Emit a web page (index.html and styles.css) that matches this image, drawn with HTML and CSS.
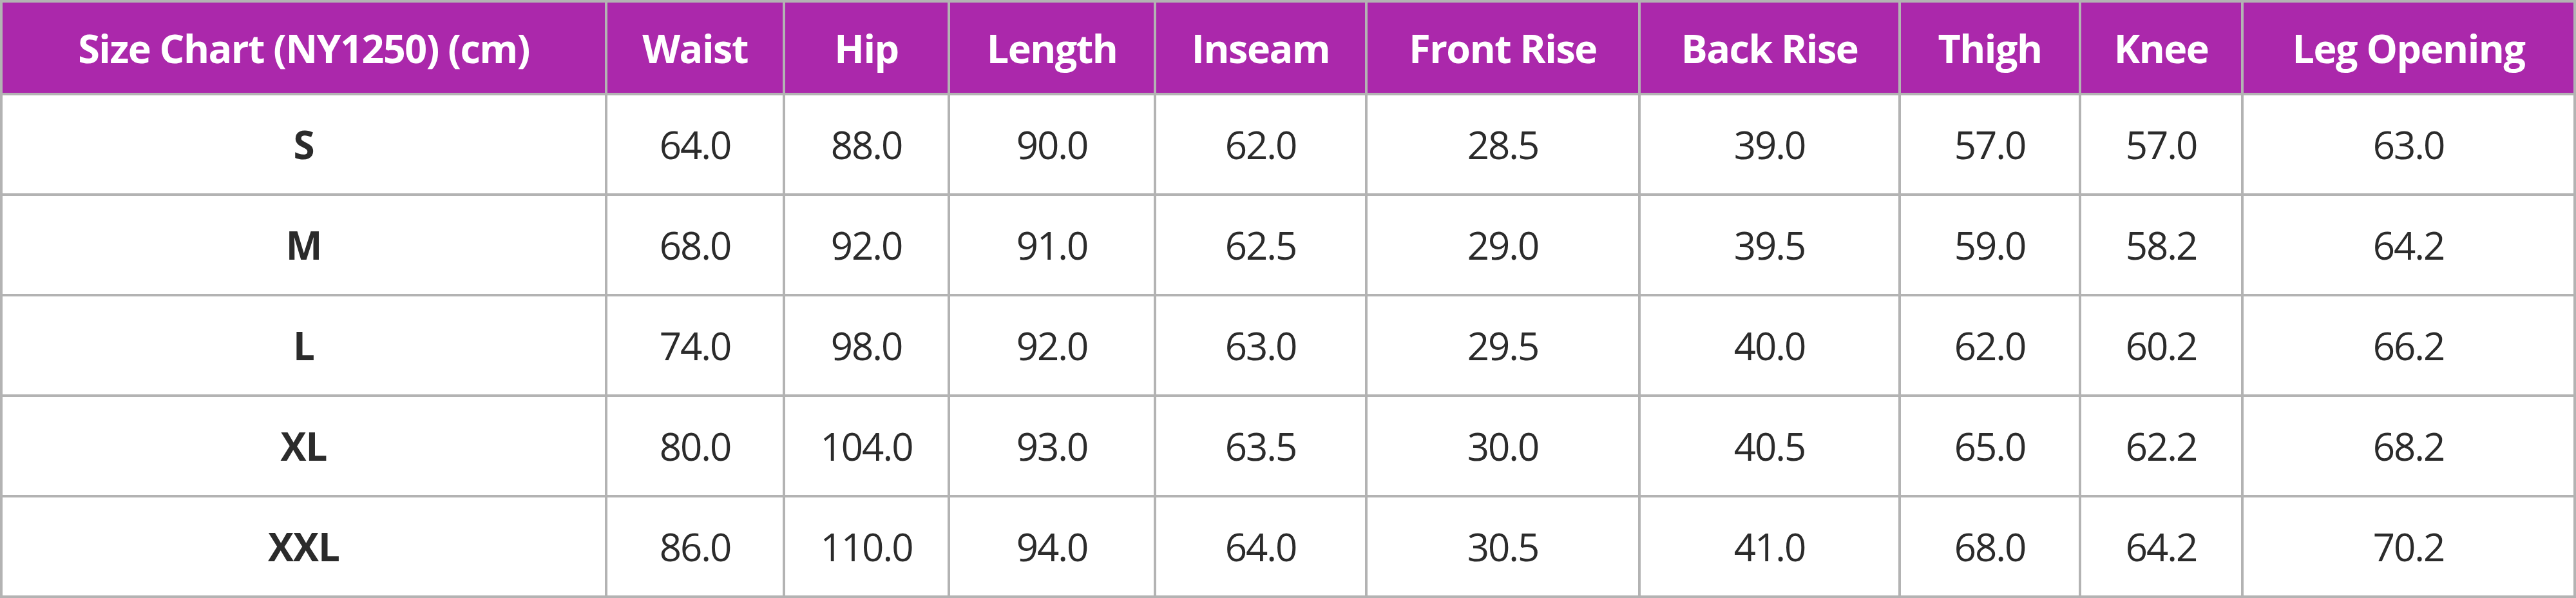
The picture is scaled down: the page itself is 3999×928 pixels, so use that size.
FILE: index.html
```html
<!DOCTYPE html>
<html lang="en">
<head>
<meta charset="utf-8">
<title>Size Chart (NY1250)</title>
<link rel="stylesheet" href="styles.css">
</head>
<body>
<div class="chart">
  <div class="cell head">Size Chart (NY1250) (cm)</div>
  <div class="cell head">Waist</div>
  <div class="cell head">Hip</div>
  <div class="cell head">Length</div>
  <div class="cell head">Inseam</div>
  <div class="cell head">Front Rise</div>
  <div class="cell head">Back Rise</div>
  <div class="cell head">Thigh</div>
  <div class="cell head">Knee</div>
  <div class="cell head">Leg Opening</div>

  <div class="cell size">S</div>
  <div class="cell">64.0</div><div class="cell">88.0</div><div class="cell">90.0</div><div class="cell">62.0</div><div class="cell">28.5</div><div class="cell">39.0</div><div class="cell">57.0</div><div class="cell">57.0</div><div class="cell">63.0</div>

  <div class="cell size">M</div>
  <div class="cell">68.0</div><div class="cell">92.0</div><div class="cell">91.0</div><div class="cell">62.5</div><div class="cell">29.0</div><div class="cell">39.5</div><div class="cell">59.0</div><div class="cell">58.2</div><div class="cell">64.2</div>

  <div class="cell size">L</div>
  <div class="cell">74.0</div><div class="cell">98.0</div><div class="cell">92.0</div><div class="cell">63.0</div><div class="cell">29.5</div><div class="cell">40.0</div><div class="cell">62.0</div><div class="cell">60.2</div><div class="cell">66.2</div>

  <div class="cell size">XL</div>
  <div class="cell">80.0</div><div class="cell">104.0</div><div class="cell">93.0</div><div class="cell">63.5</div><div class="cell">30.0</div><div class="cell">40.5</div><div class="cell">65.0</div><div class="cell">62.2</div><div class="cell">68.2</div>

  <div class="cell size">XXL</div>
  <div class="cell">86.0</div><div class="cell">110.0</div><div class="cell">94.0</div><div class="cell">64.0</div><div class="cell">30.5</div><div class="cell">41.0</div><div class="cell">68.0</div><div class="cell">64.2</div><div class="cell">70.2</div>
</div>
</body>
</html>
```
FILE: styles.css
```css
html, body {
  margin: 0;
  padding: 0;
  background: #ffffff;
}

.chart {
  display: grid;
  grid-template-columns: 935px 272px 252px 316px 324px 420px 400px 276px 248px 512px;
  grid-template-rows: 140px repeat(5, 152px);
  gap: 4px;
  padding: 4px;
  width: 3999px;
  height: 928px;
  box-sizing: border-box;
  background: #b3b3b3;
  font-family: "Open Sans", "Noto Sans", sans-serif;
}

.cell {
  display: flex;
  align-items: center;
  justify-content: center;
  background: #ffffff;
  color: #2b2b2b;
  font-size: 60px;
  font-weight: 400;
  letter-spacing: -2px;
  white-space: nowrap;
}

.head {
  background: #ab28ab;
  color: #ffffff;
  font-size: 61px;
  font-weight: 700;
  letter-spacing: -1.5px;
}

.size {
  font-weight: 700;
  letter-spacing: -1px;
}
```
